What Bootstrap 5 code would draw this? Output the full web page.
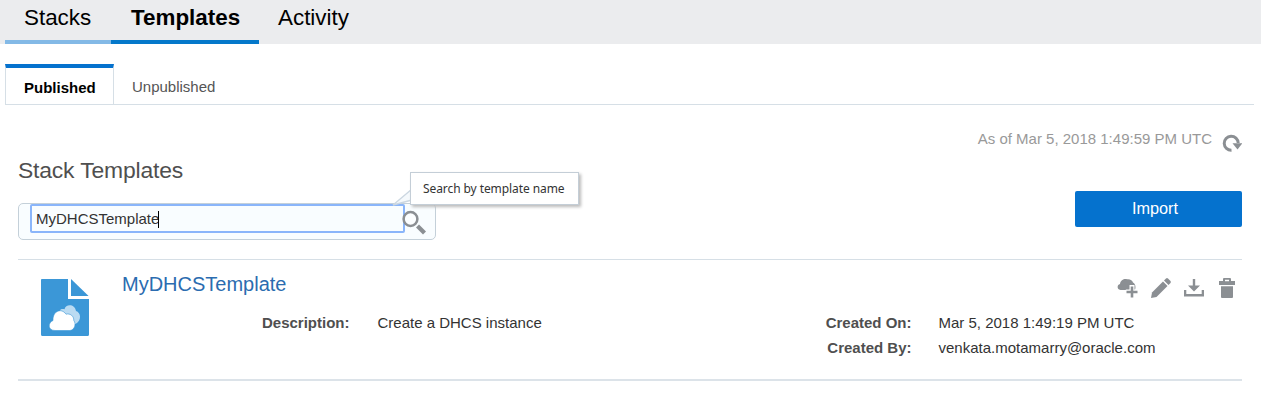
<!DOCTYPE html>
<html lang="en">
<head>
<meta charset="utf-8">
<meta name="viewport" content="width=device-width, initial-scale=1">
<title>Stack Templates</title>
<link rel="stylesheet" href="https://cdn.jsdelivr.net/npm/bootstrap@5.3.0/dist/css/bootstrap.min.css">
<style>
body{font-family:"Liberation Sans",Arial,sans-serif;font-size:15px;line-height:20px;color:#333;background:#fff;overflow:hidden}
.main-tabs{height:44px;background:#ebecee;padding-left:5px}
.main-tabs .nav-link{height:44px;color:#000;font-size:22.4px;line-height:36px;padding:0 0 0 19px;border-bottom:4px solid transparent;border-radius:0}
.main-tabs .w-stacks{width:106px;border-color:#83b9e6}
.main-tabs .w-templates{width:148px;border-color:#0478ca;padding-left:20px}
.sub-tabs{margin:20px 7px 0 5px;height:41px;border-bottom:1px solid #d6dfe6}
.sub-tabs .nav-link{height:40px;padding:13px 18px 0 18px;color:#555;border-radius:0}
.sub-tabs .active{width:109px;border:1px solid #d6dfe6;border-top:4px solid #0572ce;border-bottom:0;color:#000;padding:10px 0 0 18px}
.page-area{padding:24px 19px 0 18px}
.as-of{color:#999;height:26px}
.stack-title{font-size:22.9px;line-height:28px;color:#4f4f4f;margin:0;padding-top:1px;letter-spacing:-.17px}
.search-box{width:418px;height:37px;margin-top:19px;border:1px solid #c4d0d9;border-radius:5px;background:#f9fdff;padding:0 0 0 11px}
.search-box .form-control{width:375px;height:29px;border:2px solid #8ab5fa;border-radius:2px;background:#f9fdff;padding:2px 4px 0;font-size:15px;color:#333}
.search-box .caret-bar{width:1px;height:17px;margin-left:-1px;background:#000}
.search-tip{left:391px;top:-32px;width:169px;height:33px;border:1px solid #c4ced7;background:#fff;box-shadow:2px 2px 3px #bbb;font:12px/32px "Noto Sans",sans-serif;letter-spacing:-.08px;color:#333;padding-left:12px;white-space:nowrap}
.tip-tail{left:373px;top:-16px}
.search-icon{left:382px;top:5px}
.import-btn{width:167px;height:36px;margin-top:36px;background:#0572ce;color:#fff;border:0;border-radius:2px;font-size:16.3px;padding:0 7px 2px 0}
.template-row{height:122px;margin-top:19px;border-top:1px solid #d6dfe6;border-bottom:2px solid #dce3e9}
.template-icon{margin:19px 33px 0 22px}
.template-name{font-size:20px;line-height:24px;color:#2b6cb0;text-decoration:none}
.row-head{padding-top:12px;height:53px}
.row-actions{margin:5px 4px 0 0;gap:11px}
.field-label{font-weight:bold;color:#4f4f4f;text-align:right}
.label-a{width:227.5px}
.value-a{width:334px;padding-left:28px}
.label-b{width:228px}
.second-line{padding-top:5px}
.label-c{width:789.5px}
.value-b{padding-left:27px}
</style>
</head>
<body>
<nav class="nav main-tabs flex-nowrap">
  <a class="nav-link w-stacks">Stacks</a>
  <a class="nav-link w-templates fw-bold">Templates</a>
  <a class="nav-link">Activity</a>
</nav>
<nav class="nav sub-tabs">
  <a class="nav-link active fw-bold">Published</a>
  <a class="nav-link">Unpublished</a>
</nav>
<main class="page-area">
  <div class="d-flex justify-content-end as-of">
    <span>As of Mar 5, 2018 1:49:59 PM UTC</span>
    <svg class="ms-2 mt-1" width="22" height="20" viewBox="0 0 22 20"><path d="M11.500 17.200A7 7 0 1 1 18.200 10" fill="none" stroke="#8b8f93" stroke-width="3"/><path d="M12.500 10.200H22.500L17.500 16.500z" fill="#8b8f93"/></svg>
  </div>
  <div class="d-flex justify-content-between">
    <div>
      <h1 class="stack-title fw-normal">Stack Templates</h1>
      <div class="search-box d-flex position-relative">
        <div class="form-control d-flex align-items-center flex-shrink-0"><span>MyDHCSTemplate</span><span class="caret-bar"></span></div>
        <svg class="position-absolute search-icon" width="28" height="28" viewBox="0 0 28 28"><circle cx="9.500" cy="10" r="6.900" fill="#fcfeff" stroke="#8b8f93" stroke-width="2.500"/><path d="M16.500 17L23.500 24" stroke="#8b8f93" stroke-width="4.200"/></svg>
        <svg class="position-absolute tip-tail" width="22" height="18" viewBox="0 0 22 18"><path d="M20 1L1 17L20 12" fill="#f5f9fc" stroke="#ccd7e1" stroke-width="1.4"/></svg>
        <div class="search-tip position-absolute" role="tooltip">Search by template name</div>
      </div>
    </div>
    <button class="btn import-btn">Import</button>
  </div>
  <section class="template-row d-flex">
    <svg class="flex-shrink-0 template-icon" width="49" height="58" viewBox="0 0 49 58">
      <path d="M1.500 0H28V20H49V55.500Q49 57 47.500 57H2.500Q1 57 1 55.500V1.500Q1 0 1.500 0z" fill="#3b97d7"/>
      <path d="M31 0L48.600 17H31z" fill="#3b97d7"/>
      <path d="M20 31.500C20.500 29.800 23 29.700 24.500 30.200C25.500 24.700 35 24.500 36 32C41 33.500 42 41.500 35.500 45H28z" fill="#badbf2"/>
      <path d="M15 51.500C7.500 51.500 7.800 43.500 13 41.500C12.500 32 21.500 28.500 26 35.200C30 34 34 37 33.800 41.500C36.500 45 34.500 51 30 51.500z" fill="#fff" stroke="#3b97d7" stroke-width=".6"/>
    </svg>
    <div class="flex-grow-1">
      <div class="d-flex justify-content-between row-head">
        <a class="template-name">MyDHCSTemplate</a>
        <div class="d-flex row-actions">
          <svg width="22" height="22" viewBox="0 0 22 22" fill="#8b8f93"><path d="M3.500 13C-.5 12.500 0 7.500 3 7C3.500 3 7.500 1.300 10 2.300C13 1.800 15.500 3.500 16 5.500C18.500 7 19 9.500 18 13z"/><path d="M12.500 8h5v4.500H22v5.500h-9.500v-3H8.800v-2.500h3.700z" fill="#fff"/><path d="M13.700 9.500h2.600v4.200h4.200v2.600h-4.200v4.200h-2.600v-4.200H9.500v-2.600h4.200z"/></svg>
          <svg width="22" height="22" viewBox="0 0 22 22" fill="#8b8f93"><path d="M1 21L2 15.500L13 4.500L17.500 9L6.500 20z"/><path d="M14 3.500L16 1.500Q17 .7 18 1.500L20.500 4Q21.200 5 20.500 6L18.500 8z"/></svg>
          <svg width="22" height="22" viewBox="0 0 22 22" fill="#8b8f93"><path d="M9.800 2h2.400v6.500H17L11 14.500L5 8.500h4.800z"/><path d="M1 13h2.300v4h15.400v-4H21v6.500H1z"/></svg>
          <svg width="22" height="22" viewBox="0 0 22 22" fill="#8b8f93"><path d="M7 4V2Q7 1 8 1h6q1 0 1 1v2h4v4H3V4zM9 2.800v1.500h4V2.800z" fill-rule="evenodd"/><path d="M5 9.300h12V20q0 1-1 1H6q-1 0-1-1z"/></svg>
        </div>
      </div>
      <div class="d-flex">
        <div class="field-label label-a">Description:</div>
        <div class="value-a">Create a DHCS instance</div>
        <div class="field-label label-b">Created On:</div>
        <div class="value-b">Mar 5, 2018 1:49:19 PM UTC</div>
      </div>
      <div class="d-flex second-line">
        <div class="field-label label-c">Created By:</div>
        <div class="value-b">venkata.motamarry@oracle.com</div>
      </div>
    </div>
  </section>
</main>
<script src="https://cdn.jsdelivr.net/npm/bootstrap@5.3.0/dist/js/bootstrap.bundle.min.js"></script>
</body>
</html>
